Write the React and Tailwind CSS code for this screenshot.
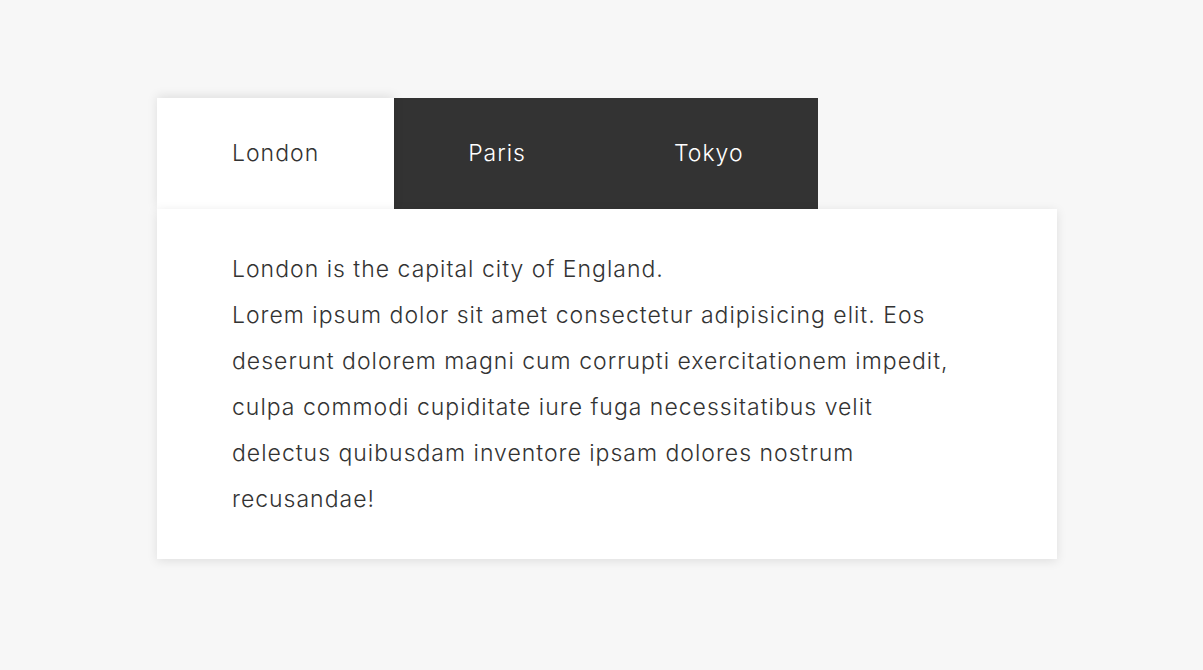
import { useState } from "react";

const tabs = [
    {
        name: "London",
        lines: [
            "London is the capital city of England.",
            "Lorem ipsum dolor sit amet consectetur adipisicing elit. Eos deserunt dolorem magni cum corrupti exercitationem impedit, culpa commodi cupiditate iure fuga necessitatibus velit delectus quibusdam inventore ipsam dolores nostrum recusandae!",
        ],
    },
    { name: "Paris", lines: ["Paris is the capital of France."] },
    { name: "Tokyo", lines: ["Tokyo is the capital of Japan."] },
];

const App = () => {
    const [active, setActive] = useState(0);

    return (
        <div
            className="min-h-screen w-full bg-[#f7f7f7] pt-[98px] pl-[157px] text-[#333] tracking-[1px]"
            style={{ fontFamily: "Inter, 'Open Sans', sans-serif" }}
        >
            <div className="flex h-[111px]">
                {tabs.map((t, i) => (
                    <button
                        key={t.name}
                        onClick={() => setActive(i)}
                        className={
                            i === active
                                ? "h-full px-[75px] bg-white text-[#333] text-[23px] font-light shadow-[0_-2px_10px_rgba(0,0,0,0.1)] relative z-10 cursor-pointer"
                                : "h-full px-[74px] bg-[#333] text-white text-[23px] font-light cursor-pointer"
                        }
                    >
                        {t.name}
                    </button>
                ))}
            </div>
            <div className="w-[900px] bg-white pl-[75px] pr-[88px] py-[37px] shadow-[0_2px_10px_rgba(0,0,0,0.1)] relative z-20">
                <p className="text-[23px] leading-[46px] font-light">
                    {tabs[active].lines.map((l, i) => (
                        <span key={i}>
                            {l}
                            {i < tabs[active].lines.length - 1 && <br />}
                        </span>
                    ))}
                </p>
            </div>
        </div>
    );
};

export default App;
